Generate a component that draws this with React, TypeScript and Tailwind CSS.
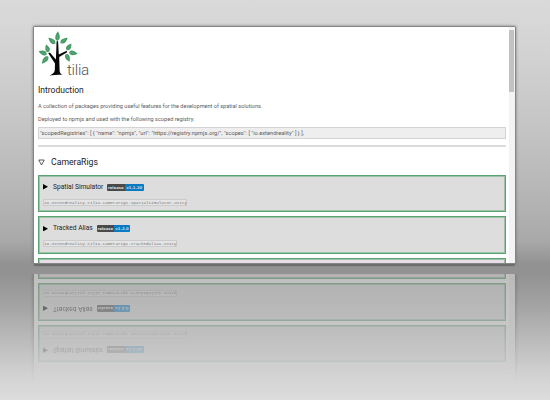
import React from "react";

// Each leaf runs from its stem end to its tip.
const leaves: [number, number, number, number][] = [
  [19.3, 11, 19.9, 1.3],
  [17.3, 13.7, 10.3, 7.7],
  [22.6, 13.2, 29.7, 7.7],
  [10.6, 22.3, 8, 14.6],
  [8.9, 24.2, 0.6, 21.2],
  [10, 26.3, 3.9, 33.7],
  [28.8, 20.3, 33.3, 13.6],
  [31, 22.4, 39.6, 23.7],
  [27.9, 24, 31.6, 31.7],
];

function Logo() {
  return (
    <svg className="block h-[48px] w-[42px] shrink-0" viewBox="0 0 42 48">
      {leaves.map(([x, y, tx, ty], i) => {
        const length = Math.hypot(tx - x, ty - y);
        const angle = (Math.atan2(ty - y, tx - x) * 180) / Math.PI;
        return (
          <g key={i} transform={`translate(${x} ${y}) rotate(${angle}) scale(${length / 10} 1)`}>
            <path d="M0 0C1.2 -2.9 4.6 -3.2 10 0C5.4 2.9 1.8 3 0 0Z" fill="#459a66" />
            <path d="M0 0L6 0" stroke="#8cc5a0" strokeWidth=".35" />
          </g>
        );
      })}
      <path
        fill="#080808"
        d="M18.6 11.2H20.1L20.8 24.4L28.6 20.8L29.2 22.2L21.2 27L21.6 40.5C21.8 43 22.6 44 24.6 44.9C20 44.5 16 45 11.4 45.5C14.6 43.9 16.5 43 16.8 40L17 33.6L10.3 23.2L11.9 22.6L17.9 29.6Z"
      />
    </svg>
  );
}

type Pkg = { name: string; id: string; version: string; nameClass: string; idClass: string; verClass: string };

const packages: Pkg[] = [
  {
    name: "Spatial Simulator",
    id: "io.extendreality.tilia.camerarigs.spatialsimulator.unity",
    version: "v1.1.20",
    nameClass: "w-[54px]",
    idClass: "w-[144px]",
    verClass: "w-[19.5px]",
  },
  {
    name: "Tracked Alias",
    id: "io.extendreality.tilia.camerarigs.trackedalias.unity",
    version: "v1.2.0",
    nameClass: "w-[43.5px]",
    idClass: "w-[134px]",
    verClass: "w-[16px]",
  },
];

function PackageCard({ pkg }: { pkg: Pkg }) {
  return (
    <div className="mb-[4px] h-[37.3px] shrink-0 border border-[#5ba373] bg-[#dddddd] px-[4px] pt-[5px] shadow-[inset_0_0_0_1px_#9cc2a8]">
      <div className="flex h-[12px] items-center">
        <svg className="mr-[5px] h-[5.5px] w-[5px] shrink-0" viewBox="0 0 5 5" preserveAspectRatio="none">
          <path d="M0 0L5 2.5L0 5Z" fill="#000" />
        </svg>
        <span className={`${pkg.nameClass} shrink-0 whitespace-nowrap text-[6.65px] leading-[12px] text-[#222]`}>{pkg.name}</span>
        <span className="flex h-[7px] shrink-0 overflow-hidden rounded-[1px] text-center font-['DejaVu_Sans',sans-serif] text-[3.8px] font-bold leading-[7px] text-[#d2dade]">
          <span className="w-[17.5px] bg-[#4a4a4a]">release</span>
          <span className={`${pkg.verClass} bg-[#087bc4]`}>{pkg.version}</span>
        </span>
      </div>
      <div
        className={`${pkg.idClass} mt-[6px] h-[7px] whitespace-nowrap border border-[#cbcbcb] bg-[#e4e4e4] font-['Liberation_Mono',monospace] text-[4.25px] leading-[5px] text-[#777]`}
      >
        {pkg.id}
      </div>
    </div>
  );
}

function PackageList() {
  return (
    <div className="flex h-[88px] shrink-0 flex-col overflow-hidden">
      {packages.map((p) => (
        <PackageCard key={p.name} pkg={p} />
      ))}
      <div className="h-[12px] shrink-0 border border-[#5ba373] bg-[#e6dde6] shadow-[inset_0_0_0_1px_#9cc2a8]" />
    </div>
  );
}

function Page() {
  return (
    <div className="flex h-full w-full overflow-hidden bg-white font-['Roboto',sans-serif]">
      <div className="flex min-w-0 flex-1 flex-col pl-[4px] pr-[3px] pt-[3px]">
        <div className="flex h-[54px] shrink-0">
          <Logo />
          <span className="-ml-[13px] pt-[30.5px] text-[15.3px] font-light leading-[18px] tracking-[-0.3px] text-[#555]">tilia</span>
        </div>
        <h1 className="h-[15px] shrink-0 text-[8.5px] leading-[12px] text-[#222]">Introduction</h1>
        <p className="h-[13px] shrink-0 whitespace-nowrap pt-[2px] text-[5.57px] leading-[10px] text-[#5c5c5c]">
          A collection of packages providing useful features for the development of spatial solutions.
        </p>
        <p className="h-[15px] shrink-0 whitespace-nowrap pt-[2px] text-[5.6px] leading-[10px] text-[#5c5c5c]">
          Deployed to npmjs and used with the following scoped registry:
        </p>
        <div className="h-[12px] shrink-0 whitespace-nowrap border border-[#d3d3d3] bg-[#eeeeee] px-[1px] text-[5.7px] leading-[10px] text-[#5c5c5c]">
          {'"scopedRegistries": [ { "name": "npmjs", "url": "https://registry.npmjs.org/", "scopes": [ "io.extendreality" ] } ],'}
        </div>
        <div className="mt-[6px] h-[2px] shrink-0 bg-[#dcdcdc]" />
        <div className="mt-[9px] flex h-[12px] shrink-0 items-center">
          <svg className="mr-[6px] h-[7px] w-[7px] shrink-0" viewBox="0 0 7 7">
            <path d="M.8 1H6.2L3.5 6Z" fill="none" stroke="#333" strokeWidth=".8" />
          </svg>
          <h2 className="text-[8.7px] leading-[12px] text-[#222]">CameraRigs</h2>
        </div>
        <div className="h-[7px] shrink-0" />
        <PackageList />
      </div>
      <div className="w-[6px] shrink-0 bg-[#f3f3f3] pt-[3px]">
        <div className="h-[62px] w-[5px] bg-[#c2c2c2]" />
      </div>
    </div>
  );
}

function Reflection() {
  return (
    <div
      aria-hidden="true"
      className="mt-[11px] h-[120px] w-[489px] shrink-0 -translate-x-[4px] px-[4px] opacity-[0.42] [mask-image:linear-gradient(to_bottom,#000_0px,rgba(0,0,0,.85)_35px,rgba(0,0,0,.42)_72px,rgba(0,0,0,.12)_96px,transparent_112px)]"
    >
      <div className="flex h-[120px] w-[481px] -scale-y-100 bg-white font-['Roboto',sans-serif] shadow-[0_0_3px_1px_#555555]">
        <div className="flex min-w-0 flex-1 flex-col justify-end pl-[4px] pr-[3px]">
          <PackageList />
        </div>
        <div className="w-[6px] shrink-0 bg-[#f3f3f3]" />
      </div>
    </div>
  );
}

export default function App() {
  return (
    <div className="flex h-[400px] w-[550px] flex-col overflow-hidden bg-[linear-gradient(to_bottom,#dadada_0px,#d3d3d3_50px,#c6c6c6_120px,#b4b4b4_200px,#a9a9a9_240px,#929292_264px,#929292_274px,#a3a3a3_305px,#bebebe_345px,#d2d2d2_375px,#dddddd_400px)] pl-[34px] pt-[27px]">
      <div className="h-[236px] w-[481px] shrink-0 rounded-[1px] shadow-[0_0_0_1px_#858585,0_3px_1px_0px_#6c6c6c,0_0_3px_1px_#777777]">
        <Page />
      </div>
      <Reflection />
    </div>
  );
}
